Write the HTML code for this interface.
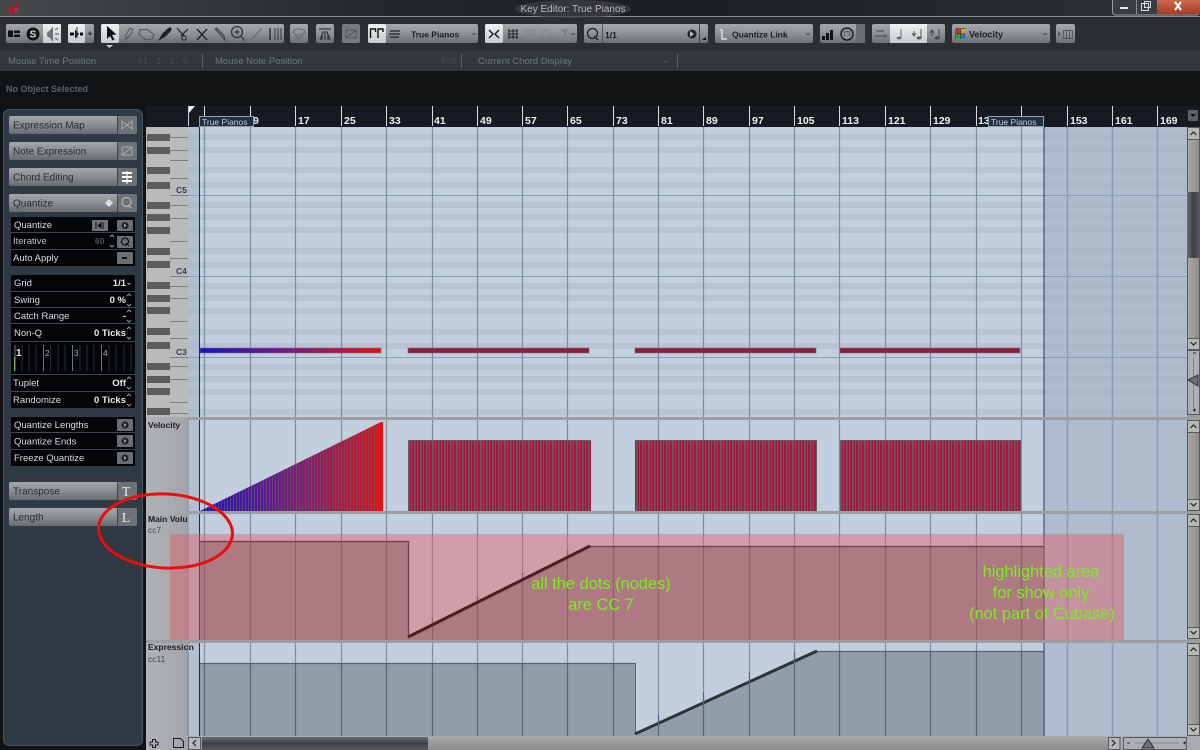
<!DOCTYPE html>
<html><head><meta charset="utf-8"><style>
html,body{margin:0;padding:0;background:#111;width:1200px;height:750px;overflow:hidden}
svg{display:block}
text{font-family:"Liberation Sans",sans-serif}
.w{fill:#d8dce0;font-size:9.5px}
.b{fill:#262b30;font-size:10px}
.r{fill:#f0f0f0;font-size:10.5px;font-weight:bold}
.i{fill:#6c7882;font-size:9.5px}
.g{fill:#78ee1a;font-size:16.4px;text-anchor:middle}
.k{fill:#3a3d42;font-size:8.5px;font-weight:bold}
.t{fill:#1a1c1f;font-size:8.5px;font-weight:bold}
</style></head><body>
<svg width="1200" height="750" viewBox="0 0 1200 750" xmlns="http://www.w3.org/2000/svg">
<defs>
<linearGradient id="title" x1="0" x2="1" y1="0" y2="0"><stop offset="0" stop-color="#46494c"/><stop offset=".3" stop-color="#26292c"/><stop offset=".55" stop-color="#1c1f22"/><stop offset="1" stop-color="#2d3034"/></linearGradient>
<linearGradient id="btn" x1="0" x2="0" y1="0" y2="1"><stop offset="0" stop-color="#a4a8ab"/><stop offset=".5" stop-color="#8e9295"/><stop offset="1" stop-color="#6c7074"/></linearGradient>
<linearGradient id="side" x1="0" x2="0" y1="0" y2="1"><stop offset="0" stop-color="#a2a6a9"/><stop offset=".5" stop-color="#898e92"/><stop offset="1" stop-color="#666b70"/></linearGradient>
<linearGradient id="lit" x1="0" x2="0" y1="0" y2="1"><stop offset="0" stop-color="#f0f0f0"/><stop offset="1" stop-color="#c8cacc"/></linearGradient>
<linearGradient id="close" x1="0" x2="0" y1="0" y2="1"><stop offset="0" stop-color="#c96a50"/><stop offset="1" stop-color="#a83a24"/></linearGradient>
<linearGradient id="vel" x1="0" x2="1" y1="0" y2="0"><stop offset="0" stop-color="#1a12c4"/><stop offset=".5" stop-color="#7a1a80"/><stop offset="1" stop-color="#e01414"/></linearGradient>
<linearGradient id="thumb" x1="0" x2="0" y1="0" y2="1"><stop offset="0" stop-color="#6a6e72"/><stop offset=".5" stop-color="#3c4044"/><stop offset="1" stop-color="#585c60"/></linearGradient>
<linearGradient id="thumbv" x1="0" x2="1" y1="0" y2="0"><stop offset="0" stop-color="#6a6e72"/><stop offset=".5" stop-color="#3c4044"/><stop offset="1" stop-color="#585c60"/></linearGradient>
<linearGradient id="track" x1="0" x2="1" y1="0" y2="0"><stop offset="0" stop-color="#a8a8a8"/><stop offset="1" stop-color="#8c8c8c"/></linearGradient>
<linearGradient id="trackh" x1="0" x2="0" y1="0" y2="1"><stop offset="0" stop-color="#a8a8a8"/><stop offset="1" stop-color="#8c8c8c"/></linearGradient>
<pattern id="st" width="6" height="10" patternUnits="userSpaceOnUse" x="408"><rect width="1.6" height="10" fill="#5f5f62"/><rect x="3" width="1" height="10" fill="#5f5f62"/></pattern>
<pattern id="st2" width="3" height="10" patternUnits="userSpaceOnUse" x="200"><rect width="1" height="10" fill="#5a5a60" opacity=".75"/></pattern>
<linearGradient id="lab" x1="0" x2="1" y1="0" y2="0"><stop offset="0" stop-color="#b0b2b5"/><stop offset="1" stop-color="#a2a5a9"/></linearGradient>
</defs>

<!-- base -->
<rect width="1200" height="750" fill="#111315"/>
<rect width="1200" height="16" fill="url(#title)"/>
<rect x="0" y="16" width="1200" height="1" fill="#8b8e90"/>
<rect x="0" y="17" width="1200" height="34" fill="#2b2f33"/>
<rect x="0" y="51" width="1200" height="20" fill="#32373b"/>
<rect x="0" y="71" width="1200" height="36" fill="#111315"/>
<ellipse cx="573" cy="9" rx="58" ry="9" fill="#3e4144" opacity=".7"/>
<path d="M19 2 L7 9 L13 16 L15 12 L13 9 L19 6 Z" fill="#a81c34"/>
<path d="M15 7 L19 10 L15 13Z" fill="#c42848"/>
<text x="573" y="12" text-anchor="middle" style="fill:#b8babc;font-size:10px">Key Editor: True Pianos</text>

<!-- window buttons -->
<rect x="1112.500" y="-2" width="87" height="17" rx="3" fill="#3a3d41" stroke="#9a9da0"/>
<rect x="1157" y="0" width="43" height="14" fill="url(#close)"/>
<rect x="1136" y="0" width="1" height="14" fill="#8a8d90"/>
<rect x="1120" y="7" width="8" height="2" fill="#e8e8e8"/>
<rect x="1141.500" y="3.500" width="7" height="7" fill="none" stroke="#ddd"/><rect x="1144.500" y="1.500" width="6" height="6" fill="none" stroke="#ddd"/>
<path d="M1175 2 L1181 10 M1181 2 L1175 10" stroke="#fff" stroke-width="2"/>

<!-- toolbar groups -->
<rect x="6" y="24" width="55" height="19" rx="2" fill="url(#btn)"/>
<rect x="43" y="24" width="18" height="19" fill="url(#lit)"/>
<path d="M8 30.500h5v6.500h-5z M14 30.500h6v2.500h-6z M14 34.500h6v2.500h-6z" fill="#111"/>
<circle cx="33" cy="34" r="6.500" fill="#141414"/><text x="33" y="37.500" text-anchor="middle" style="fill:#ddd;font-size:10px;font-weight:bold">S</text>
<path d="M47 33l4-4 2-3v16l-3-4-3-2z" fill="#6f7377"/><path d="M55 30l3-2M55 34h4M55 38l3 2" stroke="#555" fill="none"/>

<rect x="68" y="24" width="26" height="19" rx="2" fill="url(#btn)"/>
<rect x="68" y="24" width="17" height="19" rx="2" fill="url(#lit)"/>
<path d="M70 32.500h4v3h-4z M75 29.500l4 4.500-4 4.500z M80 32.500h3v3h-3z" fill="#111"/><path d="M77 27v11" stroke="#444"/>
<text x="90" y="39" text-anchor="middle" style="fill:#111;font-size:11px">*</text>

<rect x="101" y="24" width="183" height="19" rx="2" fill="url(#btn)"/>
<rect x="101" y="24" width="18" height="19" rx="2" fill="url(#lit)"/>
<path d="M107 26l0 13 3-3 2.500 4.500 2-1-2.500-4.500 4.500-.5z" fill="#111"/>
<path d="M106 45h7l-3.500 3z" fill="#cfd2d4"/>
<g fill="none" stroke="#5a5e62" stroke-width="1.200">
<path d="M125 40l1-5 4-7 3 1.500-3 6z"/>
<path d="M140 29.500h7l7 5-2 5h-7l-6-5z"/>
</g>
<path d="M158 41l4-7 5-5 3-2 2 2-2 3-5 5z" fill="#222"/>
<path d="M177 28l7 8M188 29l-7 7" stroke="#222" fill="none" stroke-width="1.200"/><circle cx="184" cy="38" r="2.200" fill="none" stroke="#222"/>
<path d="M197 29l10 11M207 29l-10 11" stroke="#222" stroke-width="1.400"/>
<path d="M215 29l8 9 2 2-1-4-7-8z" fill="#777" stroke="#444"/>
<circle cx="237" cy="32" r="5.500" fill="none" stroke="#333" stroke-width="1.300"/><path d="M241 36l3.500 4.500M234.500 32h5M237 29.500v5" stroke="#333" stroke-width="1.200"/>
<path d="M251 40l11-12" stroke="#666"/>
<path d="M270 28v12" stroke="#222" stroke-width="1.300"/><path d="M275 28v12M278 28v12M281 28v12" stroke="#333"/>

<rect x="290" y="24" width="18" height="19" rx="2" fill="url(#btn)"/>
<path d="M293 32a6 3 0 0 1 12 0l-3 3h-6z" fill="none" stroke="#666"/><path d="M296 36l3 3 3-3" fill="none" stroke="#666"/>
<rect x="316" y="24" width="18" height="19" rx="2" fill="url(#btn)"/>
<path d="M319 29h12M320 40l3-8h4l3 8" stroke="#222" fill="none"/><path d="M322 40v-5M325 40v-7M328 40v-5" stroke="#222"/>
<rect x="342" y="24" width="18" height="19" rx="2" fill="#777b7f"/>
<path d="M346 30h10v8h-10z M346 38l10-8" stroke="#505458" fill="none"/>

<rect x="368" y="24" width="110" height="19" rx="2" fill="url(#btn)"/>
<rect x="368" y="24" width="18" height="19" rx="2" fill="url(#lit)"/>
<path d="M370.500 38v-9h5v3M378 38v-9h5v3" stroke="#111" fill="none" stroke-width="1.400"/>
<path d="M390 31h10M389 34h11M390 37h9" stroke="#333" stroke-width="1.500"/>
<text x="411" y="37.500" class="t">True Pianos</text>
<path d="M471 33h6l-3 3z" fill="#666"/>

<rect x="485" y="24" width="92" height="19" rx="2" fill="url(#btn)"/>
<rect x="485" y="24" width="18" height="19" rx="2" fill="url(#lit)"/>
<path d="M489 30l4 4-4 4M499 30l-4 4 4 4" stroke="#222" fill="none" stroke-width="1.500"/>
<path d="M509 29v10M513 29v10M517 29v10M508 31h10M508 34h10M508 37h10" stroke="#222"/>
<path d="M525 30h9v9h-9zM525 34h9" stroke="#80848a" fill="none"/>
<circle cx="546" cy="34" r="4" fill="none" stroke="#80848a"/>
<path d="M560 29h9l-3 4v6h-2v-6z" fill="#80848a"/><path d="M570 33h6l-3 3z" fill="#666"/>

<rect x="584" y="24" width="124" height="19" rx="2" fill="url(#btn)"/>
<circle cx="592.500" cy="33.500" r="5" fill="none" stroke="#222" stroke-width="1.300"/><path d="M594 36l4 4" stroke="#222" stroke-width="1.300"/>
<rect x="602" y="24" width="1" height="19" fill="#555"/>
<text x="605" y="38" class="t">1/1</text>
<circle cx="692" cy="34" r="4.500" fill="#222"/><path d="M690 31l4 3-4 3z" fill="#bbb"/>
<rect x="699" y="24" width="1" height="19" fill="#444"/>
<path d="M706 37v3h-4z" fill="#111"/>

<rect x="715" y="24" width="98" height="19" rx="2" fill="url(#btn)"/>
<path d="M720 30h2v9h5" stroke="#eee" fill="none" stroke-width="1.200"/>
<text x="732" y="37.500" class="t">Quantize Link</text>
<path d="M805 33h6l-3 3z" fill="#666"/>

<rect x="820" y="24" width="45" height="19" rx="2" fill="url(#btn)"/>
<path d="M822 36h3v4h-3zM826 33h3v7h-3zM830 30h3v10h-3z" fill="#111"/>
<circle cx="847" cy="34" r="6" fill="#8a8e92" stroke="#111" stroke-width="1.300"/>
<path d="M844 32h1M849 32h1M847 31v1M844 35h1M849 35h1" stroke="#111"/>
<rect x="856" y="24" width="9" height="19" fill="#6a6e72"/>

<rect x="872" y="24" width="73" height="19" rx="2" fill="url(#btn)"/>
<rect x="890" y="24" width="37" height="19" fill="url(#lit)"/>
<path d="M875 30h10l-2 2h-6z" fill="#686c70"/><path d="M875 35h9v-2l4 3-4 3v-2h-9z" fill="#666"/>
<path d="M901 29v9" stroke="#6a6e72"/><ellipse cx="899" cy="38" rx="2.500" ry="1.500" fill="#6a6e72"/>
<path d="M921 29v9" stroke="#555"/><ellipse cx="919" cy="38" rx="2.500" ry="1.500" fill="#555"/><path d="M914 31v4M912 33l2 3 2-3" stroke="#555" fill="none"/>
<path d="M939 29v9" stroke="#444"/><ellipse cx="937" cy="38" rx="2.500" ry="1.500" fill="#444"/><path d="M932 31v5M930 33l2-3 2 3" stroke="#444" fill="none"/>

<rect x="952" y="24" width="98" height="19" rx="2" fill="url(#btn)"/>
<rect x="955.500" y="28.500" width="10" height="10" fill="#222"/>
<rect x="956" y="29" width="4.500" height="4.500" fill="#c4342c"/><rect x="961" y="29" width="4.500" height="4.500" fill="#d8a020"/><rect x="956" y="34" width="4.500" height="4.500" fill="#30a040"/><rect x="961" y="34" width="4.500" height="4.500" fill="#2c70c0"/>
<text x="969" y="37.500" style="fill:#1a1c1f;font-size:9px;font-weight:bold">Velocity</text>
<path d="M1042 33h6l-3 3z" fill="#666"/>

<rect x="1056" y="24" width="19" height="19" rx="2" fill="url(#btn)"/>
<path d="M1058 31l3 3-3 3z" fill="#55595d"/><path d="M1063.500 30.500h9v8h-9zM1066.500 30.500v8M1069.500 30.500v8" stroke="#55595d" fill="none"/>

<!-- info line -->
<text x="8" y="64" class="i">Mouse Time Position</text>
<text x="137" y="64" style="fill:#40474d;font-size:9px;font-weight:bold;letter-spacing:1.100px">41. 1. 1.  0</text>
<rect x="202" y="54" width="1" height="14" fill="#5a6268"/>
<text x="215" y="64" class="i">Mouse Note Position</text>
<text x="441" y="64" style="fill:#40474d;font-size:9px;font-weight:bold">F#5</text>
<rect x="461" y="54" width="1" height="14" fill="#5a6268"/>
<text x="478" y="64" class="i">Current Chord Display</text>
<text x="663" y="64" style="fill:#5a646c;font-size:9px">--</text>
<rect x="677" y="54" width="1" height="14" fill="#5a6268"/>
<text x="6" y="92" style="fill:#59636b;font-size:9px;font-weight:bold">No Object Selected</text>

<!-- left panel -->
<rect x="0" y="107" width="146" height="643" fill="#111315"/>
<rect x="3.500" y="109.500" width="139" height="636" rx="6" fill="#2f3a44" stroke="#4a5660"/>

<!-- button rows -->
<g>
<rect x="9" y="116" width="128" height="18" rx="2" fill="url(#side)"/><rect x="118" y="116" width="19" height="18" rx="2" fill="#6d7276"/><rect x="117" y="116" width="1" height="18" fill="#3c4348"/>
<text x="13" y="128.500" class="b">Expression Map</text>
<path d="M122 121l0 8 5-4 5 4v-8l-5 4z" fill="none" stroke="#a8acaf"/>
<rect x="9" y="142" width="128" height="18" rx="2" fill="url(#side)"/><rect x="118" y="142" width="19" height="18" rx="2" fill="#6d7276"/><rect x="117" y="142" width="1" height="18" fill="#3c4348"/>
<text x="13" y="154.500" class="b">Note Expression</text>
<path d="M122 147h10v8h-10zM122 155l10-8" stroke="#a8acaf" fill="none"/>
<rect x="9" y="168" width="128" height="18" rx="2" fill="url(#side)"/><rect x="118" y="168" width="19" height="18" rx="2" fill="#6d7276"/><rect x="117" y="168" width="1" height="18" fill="#3c4348"/>
<text x="13" y="180.500" class="b">Chord Editing</text>
<path d="M122 173h10M122 177h10M122 181h10" stroke="#fff" stroke-width="2"/><path d="M127 171v13" stroke="#fff"/>
<rect x="9" y="194" width="128" height="18" rx="2" fill="url(#side)"/><rect x="118" y="194" width="19" height="18" rx="2" fill="#6d7276"/><rect x="117" y="194" width="1" height="18" fill="#3c4348"/>
<text x="13" y="206.500" class="b">Quantize</text>
<path d="M109 199l4 4-4 4-4-4z" fill="#ddd"/>
<circle cx="126.500" cy="202" r="4.500" fill="none" stroke="#b0b4b7" stroke-width="1.300"/><path d="M128 205l3 3" stroke="#b0b4b7" stroke-width="1.300"/>
<rect x="9" y="482" width="128" height="18" rx="2" fill="url(#side)"/><rect x="118" y="482" width="19" height="18" rx="2" fill="#6d7276"/><rect x="117" y="482" width="1" height="18" fill="#3c4348"/>
<text x="13" y="494.500" class="b">Transpose</text>
<text x="126" y="496" text-anchor="middle" style="fill:#e8e8e8;font-size:14px;font-family:'Liberation Serif',serif">T</text>
<rect x="9" y="508" width="128" height="18" rx="2" fill="url(#side)"/><rect x="118" y="508" width="19" height="18" rx="2" fill="#6d7276"/><rect x="117" y="508" width="1" height="18" fill="#3c4348"/>
<text x="13" y="520.500" class="b">Length</text>
<text x="126" y="522" text-anchor="middle" style="fill:#e8e8e8;font-size:14px;font-family:'Liberation Serif',serif">L</text>
</g>

<!-- black panels -->
<rect x="11" y="217" width="124" height="49" rx="1" fill="#040506"/>
<path d="M11 232.500h124M11 249.500h124" stroke="#3e474e"/>
<text x="14" y="228" class="w">Quantize</text>
<rect x="92" y="220" width="16" height="11" rx="1" fill="#70757a"/><path d="M96 222v7M103 222v7M101 223l-3 2.500 3 2.500z" stroke="#111" fill="#111"/>
<rect x="117" y="220" width="16" height="11" rx="1" fill="#6a6f74"/><circle cx="125" cy="225.500" r="3.500" fill="#222"/><path d="M124 223.500l2.500 2-2.500 2z" fill="#aaa"/>
<text x="13" y="244" class="w" style="fill:#bbc2c8">Iterative</text>
<text x="95" y="244" style="fill:#4c555c;font-size:8.500px;font-weight:bold">60</text>
<path d="M110 237l2-2 2 2M110 245l2 2 2-2" fill="none" stroke="#999"/>
<rect x="117" y="236" width="16" height="12" rx="1" fill="#6a6f74"/><circle cx="125" cy="241.500" r="3.500" fill="none" stroke="#111" stroke-width="1.300"/><path d="M126 243l3 3" stroke="#111"/>
<text x="13" y="261" class="w">Auto Apply</text>
<rect x="117" y="252" width="16" height="12" rx="1" fill="#6a6f74"/><rect x="122" y="257" width="5" height="2" fill="#111"/>

<rect x="11" y="275" width="124" height="133" rx="1" fill="#040506"/>
<path d="M11 291.500h124M11 307.500h124M11 323.500h124M11 341.500h124M11 374.500h124M11 391.500h124" stroke="#3e474e"/>
<text x="14" y="286" class="w">Grid</text>
<text x="126" y="286" text-anchor="end" style="fill:#e8e8e8;font-size:9.500px;font-weight:bold">1/1</text>
<path d="M127 283h4l-2 2z" fill="#999"/>
<text x="14" y="303" class="w">Swing</text>
<text x="126" y="303" text-anchor="end" style="fill:#e8e8e8;font-size:9.500px;font-weight:bold">0 %</text>
<path d="M127 296l2-2 2 2M127 304l2 2 2-2" fill="none" stroke="#999"/>
<text x="14" y="319" class="w">Catch Range</text>
<text x="126" y="319" text-anchor="end" style="fill:#e8e8e8;font-size:9.500px;font-weight:bold">-</text>
<path d="M127 312l2-2 2 2M127 320l2 2 2-2" fill="none" stroke="#999"/>
<text x="14" y="336" class="w">Non-Q</text>
<text x="126" y="336" text-anchor="end" style="fill:#e8e8e8;font-size:9.500px;font-weight:bold">0 Ticks</text>
<path d="M127 329l2-2 2 2M127 337l2 2 2-2" fill="none" stroke="#999"/>
<path d="M15 345v26M43.500 345v26M72.500 345v26M101.500 345v26" stroke="#6c7880"/>
<path d="M22 345v26M29 345v26M36 345v26M50.500 345v26M58 345v26M65 345v26M80 345v26M87 345v26M94 345v26M109 345v26M116 345v26M124 345v26M131 345v26" stroke="#283036"/>
<path d="M14.500 357v14" stroke="#7ab060"/>
<text x="16" y="356" style="fill:#e8e8e8;font-size:10px;font-weight:bold">1</text>
<text x="45" y="356" style="fill:#a0a8ae;font-size:8.500px">2</text>
<text x="74" y="356" style="fill:#a0a8ae;font-size:8.500px">3</text>
<text x="103" y="356" style="fill:#a0a8ae;font-size:8.500px">4</text>
<text x="13" y="386" class="w">Tuplet</text>
<text x="126" y="386" text-anchor="end" style="fill:#e8e8e8;font-size:9.500px;font-weight:bold">Off</text>
<path d="M127 379l2-2 2 2M127 387l2 2 2-2" fill="none" stroke="#999"/>
<text x="13" y="403" class="w">Randomize</text>
<text x="126" y="403" text-anchor="end" style="fill:#e8e8e8;font-size:9.500px;font-weight:bold">0 Ticks</text>
<path d="M127 396l2-2 2 2M127 404l2 2 2-2" fill="none" stroke="#999"/>

<rect x="11" y="417" width="124" height="49" rx="1" fill="#040506"/>
<path d="M11 432.500h124M11 449.500h124" stroke="#3e474e"/>
<text x="14" y="428" class="w">Quantize Lengths</text>
<text x="14" y="444.500" class="w">Quantize Ends</text>
<text x="14" y="461" class="w">Freeze Quantize</text>
<g><rect x="117" y="419" width="16" height="12" rx="1" fill="#6a6f74"/><circle cx="125" cy="425" r="3.500" fill="#222"/><path d="M124 423l2.500 2-2.500 2z" fill="#aaa"/>
<rect x="117" y="435" width="16" height="12" rx="1" fill="#6a6f74"/><circle cx="125" cy="441" r="3.500" fill="#222"/><path d="M124 439l2.500 2-2.500 2z" fill="#aaa"/>
<rect x="117" y="452" width="16" height="12" rx="1" fill="#6a6f74"/><circle cx="125" cy="458" r="3.500" fill="#222"/><path d="M124 456l2.500 2-2.500 2z" fill="#aaa"/></g>

<!-- ruler -->
<rect x="146" y="106" width="1054" height="21" fill="#171a20"/>
<path d="M188 106h7l-6 7z" fill="#f2f2f2"/><rect x="188" y="106" width="1" height="20" fill="#cfd2d4"/>
<path d="M204.500 106v20M250.500 106v20M295.500 106v20M341.500 106v20M386.500 106v20M432.500 106v20M477.500 106v20M522.500 106v20M567.500 106v20M613.500 106v20M658.500 106v20M703.500 106v20M749.500 106v20M794.500 106v20M839.500 106v20M885.500 106v20M930.500 106v20M976.500 106v20M1021.500 106v20M1067.500 106v20M1112.500 106v20M1157.500 106v20" stroke="#d8dadc"/>
<g>
<text x="253" y="124" class="r">9</text><text x="298" y="124" class="r">17</text><text x="344" y="124" class="r">25</text><text x="389" y="124" class="r">33</text><text x="434" y="124" class="r">41</text><text x="480" y="124" class="r">49</text><text x="525" y="124" class="r">57</text><text x="570" y="124" class="r">65</text><text x="616" y="124" class="r">73</text><text x="661" y="124" class="r">81</text><text x="706" y="124" class="r">89</text><text x="752" y="124" class="r">97</text><text x="797" y="124" class="r">105</text><text x="842" y="124" class="r">113</text><text x="888" y="124" class="r">121</text><text x="933" y="124" class="r">129</text><text x="978" y="124" class="r">137</text><text x="1070" y="124" class="r">153</text><text x="1115" y="124" class="r">161</text><text x="1160" y="124" class="r">169</text>
</g>

<!-- areas background -->
<rect x="146" y="127" width="42" height="609" fill="url(#lab)"/>
<rect x="188" y="127" width="12" height="609" fill="#b2c0d1"/>
<rect x="200" y="127" width="844" height="609" fill="#c1cfde"/>
<rect x="1044" y="127" width="143" height="609" fill="#aebccd"/>

<!-- lane stripes -->
<g fill="#a3b2c4" opacity=".35">
<rect x="188" y="134" width="999" height="6"/><rect x="188" y="147" width="999" height="6"/><rect x="188" y="167" width="999" height="6"/><rect x="188" y="182" width="999" height="6"/>
<rect x="188" y="202" width="999" height="6"/><rect x="188" y="214" width="999" height="6"/><rect x="188" y="227" width="999" height="6"/><rect x="188" y="248" width="999" height="6"/><rect x="188" y="262" width="999" height="6"/>
<rect x="188" y="283" width="999" height="6"/><rect x="188" y="295" width="999" height="6"/><rect x="188" y="308" width="999" height="6"/><rect x="188" y="329" width="999" height="6"/><rect x="188" y="343" width="999" height="6"/>
<rect x="188" y="364" width="999" height="6"/><rect x="188" y="376" width="999" height="6"/><rect x="188" y="389" width="999" height="6"/><rect x="188" y="409" width="999" height="6"/>
</g>
<path d="M188 195.500h999M188 276.500h999M188 357.500h999" stroke="#8b9eb2"/>

<!-- piano keys -->
<rect x="146" y="127" width="42" height="290" fill="#b8babc"/>
<g fill="#5a5c5e">
<rect x="147" y="134" width="23" height="7"/><rect x="147" y="147" width="23" height="7"/><rect x="147" y="167" width="23" height="7"/><rect x="147" y="182" width="23" height="7"/>
<rect x="147" y="202" width="23" height="7"/><rect x="147" y="214" width="23" height="7"/><rect x="147" y="227" width="23" height="7"/><rect x="147" y="248" width="23" height="7"/><rect x="147" y="261" width="23" height="7"/>
<rect x="147" y="282" width="23" height="7"/><rect x="147" y="295" width="23" height="7"/><rect x="147" y="307" width="23" height="7"/><rect x="147" y="328" width="23" height="7"/><rect x="147" y="342" width="23" height="7"/>
<rect x="147" y="363" width="23" height="7"/><rect x="147" y="376" width="23" height="7"/><rect x="147" y="388" width="23" height="7"/><rect x="147" y="408" width="23" height="7"/>
</g>
<path d="M170 137.500h18M170 150.500h18M170 160.500h18M170 178.500h18M170 195.500h18M170 205.500h18M170 218.500h18M170 241.500h18M170 258.500h18M170 276.500h18M170 286.500h18M170 298.500h18M170 321.500h18M170 338.500h18M170 357.500h18M170 366.500h18M170 379.500h18M170 402.500h18M170 413.500h18" stroke="#7d8083"/>
<text x="176" y="193" class="k">C5</text><text x="176" y="274" class="k">C4</text><text x="176" y="355" class="k">C3</text>

<!-- vertical grid -->
<path d="M204.500 127v609M250.500 127v609M295.500 127v609M341.500 127v609M386.500 127v609M432.500 127v609M477.500 127v609M522.500 127v609M567.500 127v609M613.500 127v609M658.500 127v609M703.500 127v609M749.500 127v609M794.500 127v609M839.500 127v609M885.500 127v609M930.500 127v609M976.500 127v609M1021.500 127v609" stroke="#7a8fa4" stroke-width="1.200"/>
<path d="M1067.500 127v609M1112.500 127v609M1157.500 127v609" stroke="#8a9eb2" stroke-width="1.600"/>

<!-- notes -->
<rect x="200" y="348" width="181" height="5" fill="url(#vel)" stroke="#7c6a78" stroke-width=".6"/>
<rect x="408" y="348" width="181" height="5" fill="#8f1c3a" stroke="#7c6a70" stroke-width=".6"/>
<rect x="635" y="348" width="181" height="5" fill="#8f1c3a" stroke="#7c6a70" stroke-width=".6"/>
<rect x="840" y="348" width="180" height="5" fill="#8f1c3a" stroke="#7c6a70" stroke-width=".6"/>

<!-- velocity -->
<polygon points="200,511 381,422 383,422 383,511" fill="url(#vel)"/>
<polygon points="200,511 380,423 380,511" fill="url(#st2)"/>
<g fill="#a8143c"><rect x="408" y="440" width="183" height="71"/><rect x="635" y="440" width="182" height="71"/><rect x="840" y="440" width="181" height="71"/></g>
<g fill="url(#st)"><rect x="408" y="440" width="183" height="71"/><rect x="635" y="440" width="182" height="71"/><rect x="840" y="440" width="181" height="71"/></g>
<path d="M408 440.500h183M635 440.500h182M840 440.500h181" stroke="#5f5f62"/>

<!-- cc shapes -->
<path d="M200 541.500H408.500V638L590 546.500H1044V640H200Z" fill="#88939e"/>
<path d="M200 663.500H635V736H200Z" fill="#919da8"/>
<path d="M635 736L817 651.500H1044V736H635Z" fill="#919da8"/>
<path d="M200 663.500H635" stroke="#59636e" stroke-width="1.200"/>
<path d="M817 651.500H1044" stroke="#59636e" stroke-width="1.200"/>
<path d="M635.500 663v71" stroke="#59636e"/>
<path d="M635 734L817 651" stroke="#2e3338" stroke-width="3"/>
<path d="M204.500 542v98M250.500 542v98M295.500 542v98M341.500 542v98M386.500 542v98M432.500 618v22M477.500 596v44M522.500 573v67M567.500 550v90M613.500 547v93M658.500 547v93M703.500 547v93M749.500 547v93M794.500 547v93M839.500 547v93M885.500 547v93M930.500 547v93M976.500 547v93M1021.500 547v93" stroke="#566676" stroke-width="1.200"/>
<path d="M204.500 664v72M250.500 664v72M295.500 664v72M341.500 664v72M386.500 664v72M432.500 664v72M477.500 664v72M522.500 664v72M567.500 664v72M613.500 664v72M658.500 715v21M703.500 692v44M749.500 672v64M794.500 652v84M839.500 652v84M885.500 652v84M930.500 652v84M976.500 652v84M1021.500 652v84" stroke="#566676" stroke-width="1.200"/>

<!-- track labels -->
<rect x="146" y="418" width="42" height="332" fill="url(#lab)"/>
<text x="148" y="428" class="t">Velocity</text>
<text x="148" y="522" class="t">Main Volu</text>
<text x="148" y="533" style="fill:#3c4045;font-size:8px;letter-spacing:.3px">cc7</text>
<text x="148" y="650" class="t">Expression</text>
<rect x="188" y="640" width="1" height="10" fill="#aebccd"/>
<text x="148" y="662" style="fill:#3c4045;font-size:8px;letter-spacing:.3px">cc11</text>
<rect x="187.500" y="643" width="1" height="93" fill="#7c8187"/>
<rect x="187.500" y="514" width="1" height="126" fill="#8b8f94"/>
<rect x="187.500" y="420" width="1" height="91" fill="#8b8f94"/>

<!-- part locator lines -->
<rect x="199" y="127" width="1" height="609" fill="#1c2470"/>
<rect x="1043.500" y="127" width="1" height="609" fill="#2c3478"/>

<!-- separators -->
<rect x="188" y="417" width="1012" height="3" fill="#9b9fa3"/>
<rect x="188" y="511" width="1012" height="3" fill="#9b9fa3"/>
<rect x="146" y="640" width="1054" height="3" fill="#9b9fa3"/>

<!-- part label boxes -->
<rect x="199.500" y="116.500" width="54" height="10" fill="#232f42" stroke="#8ea0b4"/>
<text x="202" y="125" style="fill:#c2cbd4;font-size:8.500px">True Pianos</text>
<rect x="988.500" y="116.500" width="55" height="10" fill="#232f42" stroke="#8ea0b4"/>
<text x="991" y="125" style="fill:#c2cbd4;font-size:8.500px">True Pianos</text>

<!-- right scrollbars -->
<rect x="1187" y="127" width="13" height="609" fill="#9c9c9c"/>
<rect x="1188" y="110" width="10" height="11" rx="1" fill="#5c6166"/><path d="M1190 114h6l-3 3z" fill="#111"/>
<rect x="1187.500" y="127.500" width="12" height="212" fill="url(#track)" stroke="#55585c"/>
<rect x="1187" y="192" width="13" height="66" fill="url(#thumbv)"/>
<rect x="1187.500" y="127.500" width="12" height="12" fill="#b5b7b9" stroke="#55585c"/><path d="M1190.500 135l3-3 3 3" fill="none" stroke="#222" stroke-width="1.200"/>
<rect x="1187.500" y="338.500" width="12" height="11" fill="#b5b7b9" stroke="#55585c"/><path d="M1190.500 342l3 3 3-3" fill="none" stroke="#222" stroke-width="1.200"/>
<rect x="1187.500" y="350.500" width="12" height="64" fill="#adb0b3" stroke="#55585c"/>
<path d="M1193 353h3" stroke="#222"/><path d="M1193.500 358v50" stroke="#80848a"/><path d="M1193 410h3M1194.500 408.500v3" stroke="#222"/>
<path d="M1188 380l10-5v11z" fill="#6c7074" stroke="#333"/>

<rect x="1187.500" y="420.500" width="12" height="90" fill="url(#track)" stroke="#55585c"/>
<rect x="1187.500" y="420.500" width="12" height="12" fill="#b5b7b9" stroke="#55585c"/><path d="M1190.500 428l3-3 3 3" fill="none" stroke="#222" stroke-width="1.200"/>
<rect x="1187.500" y="499.500" width="12" height="11" fill="#b5b7b9" stroke="#55585c"/><path d="M1190.500 503l3 3 3-3" fill="none" stroke="#222" stroke-width="1.200"/>
<rect x="1187.500" y="514.500" width="12" height="124" fill="url(#track)" stroke="#55585c"/>
<rect x="1187.500" y="514.500" width="12" height="12" fill="#b5b7b9" stroke="#55585c"/><path d="M1190.500 522l3-3 3 3" fill="none" stroke="#222" stroke-width="1.200"/>
<rect x="1187.500" y="627.500" width="12" height="11" fill="#b5b7b9" stroke="#55585c"/><path d="M1190.500 631l3 3 3-3" fill="none" stroke="#222" stroke-width="1.200"/>
<rect x="1187.500" y="643.500" width="12" height="92" fill="url(#track)" stroke="#55585c"/>
<rect x="1187.500" y="643.500" width="12" height="12" fill="#b5b7b9" stroke="#55585c"/><path d="M1190.500 651l3-3 3 3" fill="none" stroke="#222" stroke-width="1.200"/>
<rect x="1187.500" y="724.500" width="12" height="11" fill="#b5b7b9" stroke="#55585c"/><path d="M1190.500 728l3 3 3-3" fill="none" stroke="#222" stroke-width="1.200"/>

<!-- bottom bar -->
<rect x="188" y="736" width="1012" height="14" fill="#a8abae"/>
<rect x="188" y="737" width="932" height="13" fill="url(#trackh)"/>
<rect x="188.500" y="737.500" width="12" height="12" fill="#b5b7b9" stroke="#55585c"/><path d="M196 740l-3 3 3 3" fill="none" stroke="#222" stroke-width="1.200"/>
<rect x="202" y="737" width="226" height="13" fill="url(#thumb)"/>
<rect x="1108.500" y="737.500" width="11.500" height="12" fill="#b5b7b9" stroke="#55585c"/><path d="M1112 740l3 3-3 3" fill="none" stroke="#222" stroke-width="1.200"/>
<rect x="1123.500" y="737.500" width="63" height="12" fill="#adb0b3" stroke="#55585c"/>
<path d="M1127 743h3M1183 743h3M1184.500 741.500v3" stroke="#222"/><path d="M1135 743h44" stroke="#80848a"/>
<path d="M1142 748l6-9 6 9z" fill="#6c7074" stroke="#333"/>
<path d="M152.500 739.500h3v2.500h2.500v3h-2.500v2.500h-3v-2.500H150v-3h2.500z" fill="none" stroke="#1c1c1c"/>
<path d="M173.500 738.500h7l3 3v6h-10z" fill="none" stroke="#1c1c1c"/>

<!-- red highlight overlay -->
<rect x="170" y="534" width="954" height="106" fill="#e25660" opacity=".42"/>
<path d="M200 541.500H408.500V637M590 546.500H1044" fill="none" stroke="#6e3f45" stroke-width="1.300"/>
<path d="M408 637L590 546" stroke="#4f2024" stroke-width="3.200"/>
<ellipse cx="165.500" cy="531" rx="67" ry="37" fill="none" stroke="#ee0c0c" stroke-width="3" transform="rotate(3 165.500 531)"/>

<!-- annotation text -->
<text x="601" y="589" class="g">all the dots (nodes)</text>
<text x="601" y="610" class="g">are CC 7</text>
<text x="1041" y="577" class="g">highlighted area</text>
<text x="1041" y="598" class="g">for show only</text>
<text x="1042" y="619" class="g">(not part of Cubase)</text>
</svg>
</body></html>
